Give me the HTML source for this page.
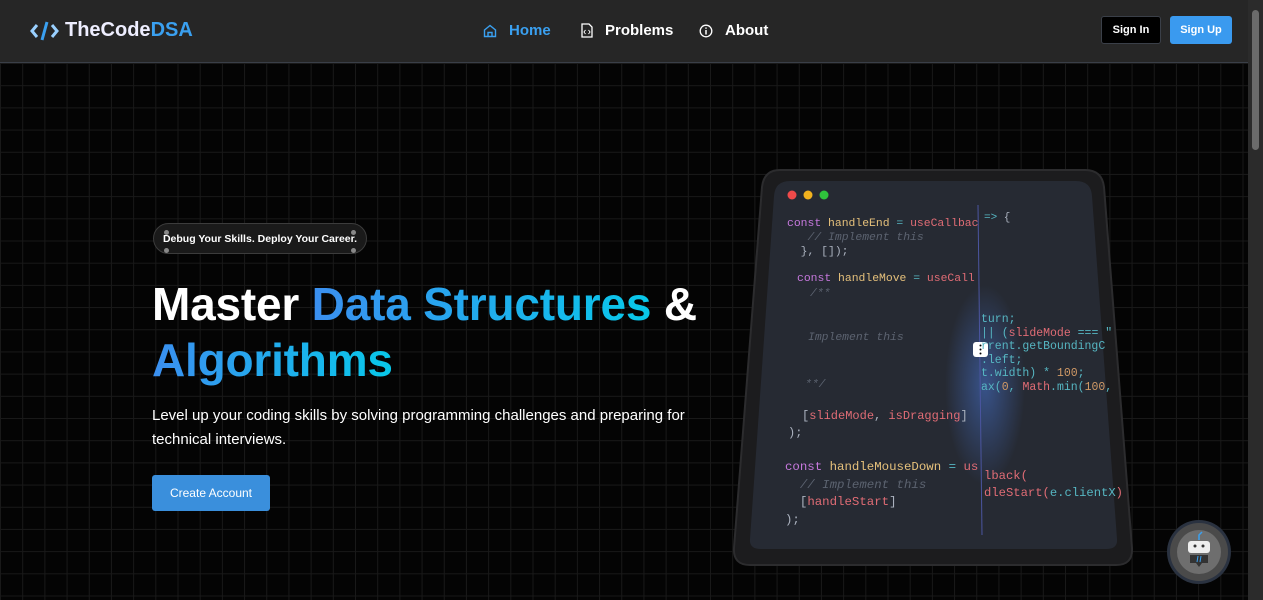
<!DOCTYPE html>
<html><head><meta charset="utf-8"><style>
*{margin:0;padding:0;box-sizing:border-box}
body{width:1263px;height:600px;overflow:hidden;background:#000;font-family:"Liberation Sans",sans-serif;position:relative}
.grid{position:absolute;left:0;top:63px;width:1248px;height:537px;background-color:#040404;
background-image:linear-gradient(#191919 1px,transparent 1px),linear-gradient(90deg,#191919 1px,transparent 1px);background-size:22.2px 22.2px;background-position:0 0}
nav{position:absolute;left:0;top:0;width:1248px;height:63px;background:#262626;border-bottom:1px solid #3a3f48}
.logo{position:absolute;left:30px;top:19px;font-size:20px;font-weight:bold;color:#eef;display:flex;align-items:center;gap:5px}
.logo b{color:#3aa0f0}
.nl{position:absolute;top:22px;font-size:15px;font-weight:bold;color:#fff;display:flex;align-items:center;gap:12px}
.btn{position:absolute;top:16px;height:28px;font-size:11px;font-weight:bold;color:#fff;display:flex;align-items:center;justify-content:center;border-radius:3px}
.sb{position:absolute;right:0;top:0;width:15px;height:600px;background:#2b2b2b}
.sb i{position:absolute;left:4px;top:10px;width:7px;height:140px;background:#6b6b6b;border-radius:4px}
.pill{position:absolute;left:153px;top:223px;width:214px;height:31px;border:1px solid #3c3c3c;background:#1a1a1a;border-radius:16px;color:#fff;font-size:10.5px;font-weight:bold;display:flex;align-items:center;justify-content:center}
.pill s{position:absolute;width:5px;height:5px;background:#888;border-radius:50%}
h1{position:absolute;left:152px;top:276px;font-size:46px;line-height:56px;color:#fff;font-weight:bold;letter-spacing:-0.2px}
.g{background:linear-gradient(90deg,#3b8ff0,#08c8ea);-webkit-background-clip:text;color:transparent}
.p{position:absolute;left:152px;top:404px;width:560px;font-size:15px;line-height:24px;color:#fff}
.ca{position:absolute;left:152px;top:475px;width:118px;height:36px;background:#3a8fdc;border-radius:3px;color:#fff;font-size:12px;display:flex;align-items:center;justify-content:center}
.code{position:absolute;font-family:"Liberation Mono",monospace;font-size:11.4px;white-space:pre;color:#abb2bf}
.k{color:#c678dd}.f{color:#e5c07b}.r{color:#e06c75}.o{color:#56b6c2}.c{color:#5c6370;font-style:italic}.n{color:#d19a66}
</style></head><body>
<div class="grid"></div>
<nav>
<div class="logo"><svg width="30" height="22" viewBox="0 0 30 22"><path d="M7 5L2 11L7 17" stroke="#9ad0ff" stroke-width="3" fill="none"/><path d="M17 2L12 20" stroke="#3aa0f0" stroke-width="3"/><path d="M22 5L27 11L22 17" stroke="#9ad0ff" stroke-width="3" fill="none"/></svg><span>TheCode<b>DSA</b></span></div>
<div class="nl" style="left:483px;color:#3aa0f0"><svg width="14" height="14" viewBox="0 0 14 14"><path d="M1.5 6L7 1.5L12.5 6V12.5H1.5Z M5 12.5V8.5H9V12.5" stroke="#3aa0f0" stroke-width="1.4" fill="none"/></svg>Home</div>
<div class="nl" style="left:581px"><svg width="12" height="15" viewBox="0 0 12 15"><path d="M1 1H8L11 4V14H1Z" stroke="#fff" stroke-width="1.3" fill="none"/><path d="M4.5 7L3 9L4.5 11M7.5 7L9 9L7.5 11" stroke="#fff" stroke-width="1"/></svg>Problems</div>
<div class="nl" style="left:699px"><svg width="14" height="14" viewBox="0 0 14 14"><circle cx="7" cy="7" r="5.8" stroke="#fff" stroke-width="1.3" fill="none"/><path d="M7 6V10.5M7 3.5V4.8" stroke="#fff" stroke-width="1.5"/></svg>About</div>
<div class="btn" style="left:1101px;width:60px;background:#000;border:1px solid #3a3f48">Sign In</div>
<div class="btn" style="left:1170px;width:62px;background:#3a9aef">Sign Up</div>
</nav>
<div class="sb"><i></i></div>

<div class="pill"><s style="left:10px;top:6px"></s><s style="left:10px;top:24px"></s><s style="right:10px;top:6px"></s><s style="right:10px;top:24px"></s>Debug Your Skills. Deploy Your Career.</div>
<h1>Master <span class="g">Data Structures</span> &amp;<br><span class="g">Algorithms</span></h1>
<div class="p">Level up your coding skills by solving programming challenges and preparing for technical interviews.</div>
<div class="ca">Create Account</div>

<svg style="position:absolute;left:730px;top:165px" width="410" height="410">
<defs><radialGradient id="gl" cx="0.5" cy="0.5" r="0.5"><stop offset="0" stop-color="#4a7be0" stop-opacity="0.5"/><stop offset="1" stop-color="#4a7be0" stop-opacity="0"/></radialGradient></defs>
<path d="M50 5H355Q372 5 374 22L402 383Q403 400 386 400H20Q3 400 4 383L32 22Q34 5 50 5Z" fill="#1c1c1e" stroke="#2c2c2e" stroke-width="2"/>
<path d="M60 16H346Q361 16 362 31L387 374Q388 384 376 384H31Q19 384 20 374L44 31Q45 16 60 16Z" fill="#262a33"/>
<ellipse cx="255" cy="220" rx="40" ry="100" fill="url(#gl)"/>
<line x1="248" y1="40" x2="252" y2="370" stroke="#4b55a0" stroke-width="1"/>
<circle cx="62" cy="30" r="4.5" fill="#ef4a4a"/><circle cx="78" cy="30" r="4.5" fill="#f2b21e"/><circle cx="94" cy="30" r="4.5" fill="#2fc43c"/>
<rect x="243" y="177" width="15" height="15" rx="3" fill="#fff"/><circle cx="250.5" cy="180.5" r="1" fill="#000"/><circle cx="250.5" cy="184.5" r="1" fill="#000"/><circle cx="250.5" cy="188.5" r="1" fill="#000"/>
</svg>
<div class="code" style="left:787px;top:217px;line-height:14px"><span class="k">const</span> <span class="f">handleEnd</span> <span class="o">=</span> <span class="r">useCallbac</span>
   <span class="c">// Implement this</span>
  }, []);</div>
<div class="code" style="left:797px;top:273px"><span class="k">const</span> <span class="f">handleMove</span> <span class="o">=</span> <span class="r">useCall</span></div>
<div class="code" style="left:810px;top:288px" ><span class="c">/**</span></div>
<div class="code" style="left:808px;top:332px"><span class="c">Implement this</span></div>
<div class="code" style="left:805px;top:379px"><span class="c">**/</span></div>
<div class="code" style="left:802px;top:409px;font-size:12px">[<span class="r">slideMode</span>, <span class="r">isDragging</span>]</div>
<div class="code" style="left:788px;top:426px;font-size:12px">);</div>
<div class="code" style="left:785px;top:459px;font-size:12.4px;line-height:17.5px"><span class="k">const</span> <span class="f">handleMouseDown</span> <span class="o">=</span> <span class="r">us</span>
  <span class="c">// Implement this</span>
  [<span class="r">handleStart</span>]
);</div>
<div class="code" style="left:984px;top:212px;font-size:11px"><span class="o">=&gt;</span> {</div>
<div class="code" style="left:981px;top:313px;font-size:11.5px;line-height:13.5px;color:#56b6c2">turn;
|| (<span class="r">slideMode</span> === "
rrent.getBoundingC
.left;
t.width) * <span class="n">100</span>;
ax(<span class="n">0</span>, <span class="r">Math</span>.min(<span class="n">100</span>,</div>
<div class="code" style="left:984px;top:468px;font-size:12.2px;line-height:17px;color:#e06c75">lback(
dleStart(<span class="o">e.clientX</span>)</div>

<svg style="position:absolute;left:1166px;top:519px" width="66" height="66">
<circle cx="33" cy="33" r="32" fill="#2a3240"/><circle cx="33" cy="33" r="29" fill="#4a4a4a"/><circle cx="33" cy="33" r="22" fill="#6e6e6e"/>
<rect x="22" y="22" width="22" height="12" rx="3" fill="#eee"/><circle cx="29" cy="27" r="1.5" fill="#333"/><circle cx="37" cy="27" r="1.5" fill="#333"/>
<path d="M33 21V16L36 13" stroke="#3aa0f0" stroke-width="1.5" fill="none"/>
<path d="M24 36H42V44H36L33 48L30 44H24Z" fill="#333"/><path d="M32 37L31 43M35 37L34 43" stroke="#3aa0f0" stroke-width="1"/>
</svg>
</body></html>
